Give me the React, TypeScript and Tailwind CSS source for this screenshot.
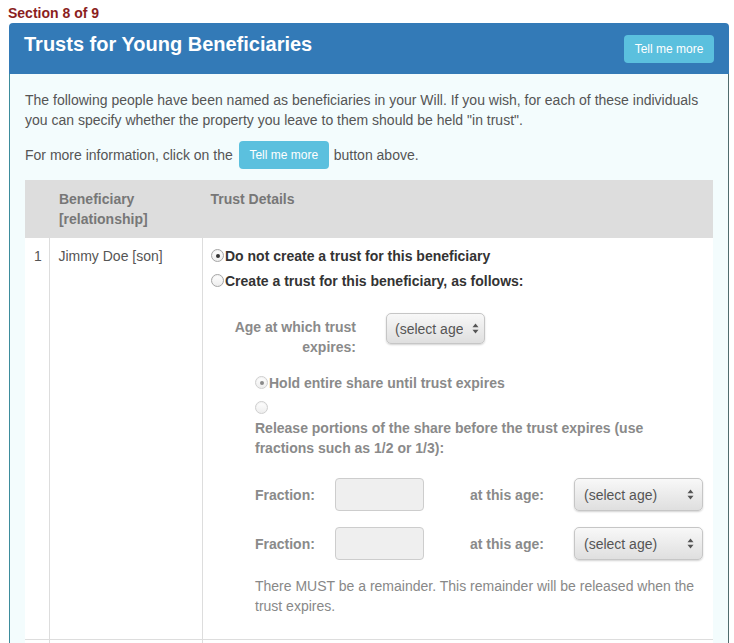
const FONT = "font-['Liberation_Sans',Arial,sans-serif]";

function Radio({ checked = false, muted = false }: { checked?: boolean; muted?: boolean }) {
  return (
    <span
      className={`inline-flex h-[13px] w-[13px] shrink-0 items-center justify-center rounded-full border bg-gradient-to-b from-white to-[#ededed] shadow-[inset_0_1px_1px_rgba(0,0,0,0.06)] ${
        muted ? 'border-[#cfcfcf]' : 'border-[#a6a6a6]'
      }`}
    >
      {checked && (
        <span className={`h-[4px] w-[4px] rounded-full ${muted ? 'bg-[#8a8a8a]' : 'bg-[#333]'}`} />
      )}
    </span>
  );
}

function Arrows() {
  return (
    <svg width="7" height="11" viewBox="0 0 7 11" className="shrink-0">
      <path d="M3.5 0.5 L6.5 4.3 L0.5 4.3 Z" fill="#555" />
      <path d="M3.5 10.5 L6.5 6.7 L0.5 6.7 Z" fill="#555" />
    </svg>
  );
}

function FakeSelect({ label, className, textClass = '' }: { label: string; className: string; textClass?: string }) {
  return (
    <div
      className={`flex shrink-0 items-center justify-between overflow-hidden rounded-[5px] border border-[#c6c6c6] bg-gradient-to-b from-[#f8f8f8] to-[#dfdfdf] shadow-[0_1px_2px_rgba(0,0,0,0.18)] ${className}`}
    >
      <span className={`overflow-hidden whitespace-nowrap text-[14px] text-[#555] ${textClass}`}>{label}</span>
      <Arrows />
    </div>
  );
}

function TellMeMore() {
  return (
    <button
      type="button"
      className="inline-flex h-[28px] w-[90px] shrink-0 items-center justify-center rounded-[4px] bg-[#5bc0de] text-[12px] text-white"
    >
      Tell me more
    </button>
  );
}

function FractionRow() {
  return (
    <div className="flex items-center">
      <span className="w-[80px] text-[14px] font-bold text-[#8a8a8a]">Fraction:</span>
      <div className="h-[33px] w-[89px] rounded-[4px] border border-[#cdcdcd] bg-[#efefef]" />
      <span className="ml-[46px] w-[104px] text-[14px] font-bold text-[#8a8a8a]">at this age:</span>
      <FakeSelect label="(select age)" className="h-[33px] w-[129px] pl-[9px] pr-[8px]" />
    </div>
  );
}

export default function App() {
  return (
    <div className={`${FONT} min-h-screen bg-white pl-[8px] pt-[3px] text-[14px] leading-[20px]`}>
      <div className="text-[14px] font-bold leading-[20px] text-[#8b1e1e]">Section 8 of 9</div>

      <div className="ml-[1px] w-[720px]">
        <div className="flex h-[51px] items-start justify-between rounded-t-[4px] bg-[#337ab7] px-[15px] pt-[7px]">
          <h1 className="text-[20px] font-bold leading-[28px] text-white">Trusts for Young Beneficiaries</h1>
          <div className="mt-[5px]">
            <TellMeMore />
          </div>
        </div>

        <div className="border-l border-r border-l-[#3d8c9c] border-r-[#4f6c6e] bg-[#f3fcfd] px-[15px] pt-[16px] pb-[20px]">
          <p className="mb-[11px] text-[#555]">
            The following people have been named as beneficiaries in your Will. If you wish, for each of these individuals
            you can specify whether the property you leave to them should be held "in trust".
          </p>
          <p className="mb-[12px] flex h-[27px] items-center text-[#555]">
            <span>For more information, click on the</span>
            <span className="ml-[6px] mr-[5px] flex">
              <TellMeMore />
            </span>
            <span>button above.</span>
          </p>

          <table className="w-[688px] border-collapse bg-white">
            <thead>
              <tr className="bg-[#dddddd] text-left align-top">
                <th className="w-[25px] px-[8px] py-[9px]" />
                <th className="w-[153px] py-[9px] pl-[9px] pr-[8px] font-bold text-[#777]">
                  Beneficiary
                  <br />
                  [relationship]
                </th>
                <th className="py-[9px] pl-[8px] font-bold text-[#777]">Trust Details</th>
              </tr>
            </thead>
            <tbody>
              <tr className="border-b border-[#dddddd] align-top">
                <td className="border-r border-[#dddddd] py-[8px] pl-[9px] text-[#555]">1</td>
                <td className="border-r border-[#dddddd] py-[8px] pl-[8px] text-[#555]">Jimmy Doe [son]</td>
                <td className="pt-[5px] pb-[23px] pl-[8px] pr-[10px]">
                  <div className="flex h-[25px] items-center gap-px font-bold text-[#333]">
                    <Radio checked />
                    <span>Do not create a trust for this beneficiary</span>
                  </div>
                  <div className="flex h-[25px] items-center gap-px font-bold text-[#333]">
                    <Radio />
                    <span>Create a trust for this beneficiary, as follows:</span>
                  </div>

                  <div className="mt-[20px] flex items-start">
                    <div className="mt-[4px] w-[145px] text-right font-bold text-[#8a8a8a]">
                      Age at which trust expires:
                    </div>
                    <FakeSelect
                      label="(select age"
                      className="ml-[30px] h-[31px] w-[99px] pl-[8px] pr-[5px]"
                    />
                  </div>

                  <div className="mt-[13px] ml-[44px]">
                    <div className="flex h-[25px] items-center gap-px font-bold text-[#8a8a8a]">
                      <Radio checked muted />
                      <span>Hold entire share until trust expires</span>
                    </div>
                    <div className="flex h-[25px] items-center">
                      <Radio muted />
                    </div>
                    <p className="mt-[-2px] font-bold text-[#8a8a8a]">
                      Release portions of the share before the trust expires (use fractions such as 1/2 or 1/3):
                    </p>

                    <div className="mt-[20px] flex flex-col gap-[16px]">
                      <FractionRow />
                      <FractionRow />
                    </div>

                    <p className="mt-[16px] text-[#888]">
                      There MUST be a remainder. This remainder will be released when the trust expires.
                    </p>
                  </div>
                </td>
              </tr>
              <tr className="align-top">
                <td className="h-[60px] border-r border-[#dddddd]" />
                <td className="border-r border-[#dddddd]" />
                <td />
              </tr>
            </tbody>
          </table>
        </div>
      </div>
    </div>
  );
}
